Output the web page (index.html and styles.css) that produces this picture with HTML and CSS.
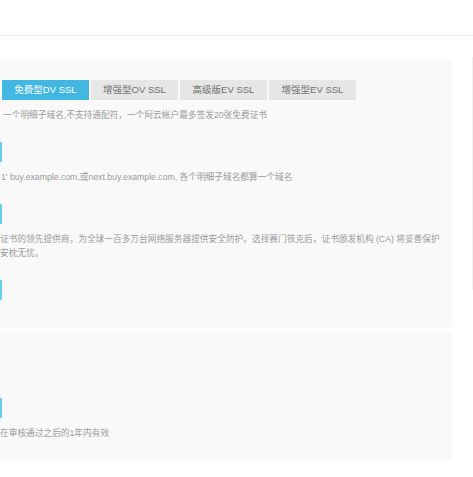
FILE: index.html
```html
<!DOCTYPE html>
<html lang="zh-CN">
<head>
<meta charset="utf-8">
<title>SSL证书</title>
<link rel="stylesheet" href="styles.css">
</head>
<body>
<header class="topbar"></header>
<main class="main">
  <div class="content">
    <section class="panel panel-first">
      <nav class="tabs">
        <span class="tab tab-active">免费型DV SSL</span>
        <span class="tab">增强型OV SSL</span>
        <span class="tab">高级版EV SSL</span>
        <span class="tab">增强型EV SSL</span>
      </nav>
      <p class="desc desc-first">一个明细子域名,不支持通配符，一个阿云帐户最多签发20张免费证书</p>
      <div class="item">
        <div class="mark"></div>
        <p class="desc desc-second">1' buy.example.com,或next.buy.example.com, 各个明细子域名都算一个域名</p>
      </div>
      <div class="item">
        <div class="mark"></div>
        <p class="desc">证书的领先提供商，为全球一百多万台网络服务器提供安全防护。选择赛门铁克后，证书颁发机构 (CA) 将妥善保护<br>安枕无忧。</p>
      </div>
      <div class="item">
        <div class="mark"></div>
      </div>
    </section>
    <section class="panel panel-second">
      <div class="item item-late">
        <div class="mark"></div>
        <p class="desc">在审核通过之后的1年内有效</p>
      </div>
    </section>
  </div>
  <div class="side-line"></div>
</main>
</body>
</html>
```
FILE: styles.css
```css
html, body {
  margin: 0;
  padding: 0;
  background: #ffffff;
}
body {
  font-family: "Liberation Sans", "Noto Sans CJK SC", sans-serif;
  width: 473px;
  overflow: hidden;
}
.topbar {
  height: 35px;
  border-bottom: 1px solid #ececec;
}
.main {
  display: flex;
  justify-content: space-between;
  align-items: flex-start;
  padding-top: 24px;
}
.content {
  width: 452px;
}
.panel {
  background: #f9f9f9;
  overflow: hidden;
  box-shadow: 0 0 3px rgba(0, 0, 0, 0.02);
}
.panel-first {
  height: 247px;
  padding-top: 20px;
}
.panel-second {
  margin-top: 6px;
  height: 127px;
}
.tabs {
  display: flex;
  gap: 2px;
  margin-left: 2px;
}
.tab {
  width: 87px;
  height: 20px;
  line-height: 20px;
  text-align: center;
  font-size: 9.5px;
  color: #707070;
  background: #e6e6e6;
  white-space: nowrap;
}
.tab-active {
  background: #41b7e1;
  color: #ffffff;
}
.desc {
  margin: 0;
  font-size: 8.7px;
  line-height: 14px;
  color: #9a9a9a;
  white-space: nowrap;
}
.desc-first {
  margin-top: 8px;
  padding-left: 3px;
}
.desc-second {
  padding-left: 1px;
}
.item {
  margin-top: 20px;
}
.item-late {
  margin-top: 65px;
}
.mark {
  width: 2px;
  height: 20px;
  background: #66d0e8;
  margin-bottom: 8px;
}
.side-line {
  width: 1px;
  height: 233px;
  margin-top: -3px;
  background: #f1f1f1;
}
```
